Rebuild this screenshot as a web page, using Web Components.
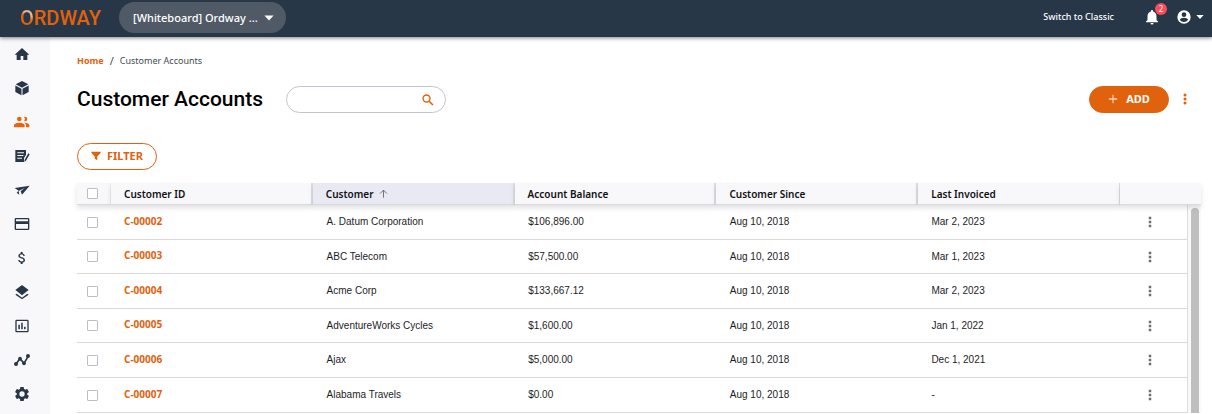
<!DOCTYPE html>
<html lang="en">
<head>
<meta charset="utf-8">
<title>Customer Accounts</title>
<style>
html,body{margin:0;height:100%}
body{font-family:"Noto Sans",sans-serif;font-size:10px;color:#1d1d1f;background:#fff;overflow:hidden}
</style>
</head>
<body>
<ow-app></ow-app>
<script>
const ICONS={
home:'<path d="M10 21v-6h4v6h6v-8h3L12 3 1 13h3v8z"/>',
box:'<path d="M12 1.500 21.500 6.500 12 11.500 2.500 6.500zM2 8.300 11.200 13v9.800L2 18zM22 8.300 12.800 13v9.800L22 18z"/>',
people:'<path d="M16.500 11a3.500 3.500 0 1 0 0-7 3.500 3.500 0 0 0-1.300.3 5.400 5.400 0 0 1 0 6.500c.4.100.8.200 1.300.200zM8 11a3.500 3.500 0 1 0 0-7 3.500 3.500 0 0 0 0 7zm0 2c-2.700 0-8 1.300-8 4v3h16v-3c0-2.700-5.300-4-8-4zm8.500 0h-1c1.400 1 2.500 2.300 2.500 4v3h5v-3c0-2.700-3.800-4-6.500-4z"/>',
invoice:'<path fill-rule="evenodd" d="M2 3h16v7l-3 5v6H2zM5 6.500V8h10V6.500zm0 4V12h9v-1.500zm0 4V16h7v-1.500zM21.500 8l2 1.500L18 19l-2.500 1.500.5-3z"/>',
send:'<path d="M1 9 23.500 5.500 12 19l-2-5 6-5-9 4.500L8 19l-4-3 3-3z"/>',
card:'<path d="M21 3H3a2 2 0 0 0-2 2v14a2 2 0 0 0 2 2h18a2 2 0 0 0 2-2V5a2 2 0 0 0-2-2zm0 16H3v-7h18zm0-11H3V5h18z"/>',
dollar:'<path d="M11.800 10.900c-2.270-.59-3-1.200-3-2.150 0-1.090 1.010-1.850 2.700-1.850 1.780 0 2.440.85 2.500 2.100h2.210c-.07-1.720-1.120-3.300-3.210-3.810V3h-3v2.160c-1.940.42-3.500 1.680-3.500 3.610 0 2.310 1.910 3.460 4.700 4.130 2.500.6 3 1.480 3 2.410 0 .69-.49 1.790-2.700 1.790-2.060 0-2.870-.92-2.980-2.100h-2.200c.12 2.190 1.760 3.420 3.680 3.830V21h3v-2.150c1.950-.37 3.500-1.500 3.500-3.550 0-2.840-2.430-3.810-4.700-4.400z"/>',
layers:'<path d="m12 20.500-8-6-2 1.500 10 7 10-7-2-1.500zM12 17l8-6.500L22 9l-10-7.500L2 9l2 1.500z"/>',
chart:'<path d="M20 2.500H4a2 2 0 0 0-2 2v15c0 1.100.9 2 2 2h16a2 2 0 0 0 2-2v-15a2 2 0 0 0-2-2zm0 17H4v-15h16zM6.500 10h2.300v7H6.500zm4.300-3h2.300v10h-2.300zm4.300 6h2.300v4h-2.300z"/>',
trend:'<path d="m3 18 6-8 6 7 6-10" fill="none" stroke="currentColor" stroke-width="2.500"/><circle cx="3" cy="18" r="3"/><circle cx="9" cy="10" r="2.800"/><circle cx="15" cy="17" r="2.800"/><circle cx="21" cy="6" r="3"/>',
gear:'<path transform="translate(-1.200 -1.200) scale(1.100)" d="M19.140 12.940c.04-.3.060-.61.060-.94s-.02-.64-.07-.94l2.030-1.580a.49.49 0 0 0 .12-.61l-1.920-3.320a.49.49 0 0 0-.59-.22l-2.390.96a7 7 0 0 0-1.620-.94l-.36-2.540a.48.480 0 0 0-.48-.41h-3.840a.48.480 0 0 0-.47.41l-.36 2.540a7.400 7.400 0 0 0-1.620.94l-2.390-.96a.48.480 0 0 0-.59.22L2.740 8.870a.47.470 0 0 0 .12.610l2.030 1.580a6 6 0 0 0 0 1.880l-2.030 1.580a.49.49 0 0 0-.12.610l1.920 3.320c.12.220.37.290.59.220l2.390-.96c.5.380 1.030.700 1.620.940l.36 2.540c.05.240.24.410.48.410h3.840c.24 0 .44-.17.470-.41l.36-2.540a7 7 0 0 0 1.620-.94l2.390.96c.22.080.47 0 .59-.22l1.920-3.320a.47.470 0 0 0-.12-.61zM12 15.600a3.600 3.600 0 1 1 0-7.200 3.600 3.600 0 0 1 0 7.200z"/>',
search:'<circle cx="9.500" cy="9.500" r="6" fill="none" stroke="currentColor" stroke-width="2.300"/><path d="m14 14 6.500 6.500" fill="none" stroke="currentColor" stroke-width="2.600"/>',
bell:'<path d="M12 22a2 2 0 0 0 2-2h-4a2 2 0 0 0 2 2zm6-6v-5c0-3.070-1.640-5.640-4.500-6.320V4a1.500 1.500 0 0 0-3 0v.68C7.630 5.360 6 7.920 6 11v5l-2 2v1h16v-1z"/>',
user:'<path d="M12 2a10 10 0 1 0 0 20 10 10 0 0 0 0-20zm0 3a3.500 3.500 0 1 1 0 7 3.500 3.500 0 0 1 0-7zm0 14.400c-2.600 0-4.900-1.300-6.200-3.400.03-2 4.100-3 6.200-3s6.200 1 6.200 3a7.400 7.400 0 0 1-6.200 3.400z"/>',
down:'<path d="M1 6h22L12 18z"/>',
plus:'<path d="M11 2h2v9h9v2h-9v9h-2v-9H2v-2h9z"/>',
filter:'<path d="M1 2h22v2.500L15 13v9l-6-3.500V13L1 4.500z"/>',
up:'<path d="M12 23V3M3 12l9-9 9 9" fill="none" stroke="currentColor" stroke-width="2.400"/>',
dots:'<path d="M9.500 1.500h5v5h-5zM9.500 9.500h5v5h-5zM9.500 17.500h5v5h-5z"/>',
more:'<circle cx="12" cy="4" r="3"/><circle cx="12" cy="12" r="3"/><circle cx="12" cy="20" r="3"/>'
};
const define=(name,html,setup)=>{
  const t=document.createElement('template');t.innerHTML=html;
  customElements.define(name,class extends HTMLElement{
    constructor(){super();this.attachShadow({mode:'open'}).append(t.content.cloneNode(true));}
    connectedCallback(){if(setup&&!this.ready){this.ready=true;setup(this,this.shadowRoot);}}
  });
};
define('ow-icon','<style>:host{display:block;flex:none;width:var(--size,14px);height:var(--size,14px)}svg{display:block;width:100%;height:100%;fill:currentColor}</style><svg viewBox="0 0 24 24" aria-hidden="true"></svg>',
  (el,r)=>{r.querySelector('svg').innerHTML=ICONS[el.getAttribute('name')];});

define('ow-topbar',`<style>
:host{display:flex;align-items:center;height:37px;padding:0 8px 4px 20px;background:#273747;color:#fff;box-shadow:0 1px 4px rgba(0,0,0,.5);position:relative;z-index:1;box-sizing:border-box}
button{font:inherit;color:inherit;border:0;background:none;padding:0;display:flex;align-items:center}
.logo{font:500 20px/24px Roboto,sans-serif;color:#e0620d;text-decoration:none;width:82px;padding-top:2px}
.logo span{background:linear-gradient(215deg,#f0b48c 35%,#e0620d 50%);-webkit-background-clip:text;background-clip:text;color:transparent}
.org{margin:2px auto 0 17px;width:167px;box-sizing:border-box;height:31px;border-radius:16px;background:#505a66;padding:0 12px 0 14px;font-size:11px;font-weight:500;gap:6px;white-space:nowrap}
.org ow-icon{--size:10px}
.switch{color:inherit;text-decoration:none;font-size:9px;font-weight:500;margin-right:29px}
.bell{position:relative;margin-right:15px;--size:18px}
.badge{position:absolute;left:12px;top:-5px;width:12px;height:12px;border-radius:6px;background:#fb4d57;font-size:8px;line-height:12px;text-align:center}
.user{gap:4px;--size:16px}
.user .c{--size:8px}
</style>
<a class="logo" href="#"><span>O</span>RDWAY</a>
<button class="org">[Whiteboard] Ordway ...<ow-icon name="down"></ow-icon></button>
<a class="switch" href="#">Switch to Classic</a>
<button class="bell" aria-label="Notifications"><ow-icon name="bell"></ow-icon><span class="badge">2</span></button>
<button class="user" aria-label="Account"><ow-icon name="user"></ow-icon><ow-icon class="c" name="down"></ow-icon></button>`);

define('ow-sidebar',`<style>
:host{display:block;width:50px;flex:none;background:#f8f8fb;color:#273747}
nav{display:flex;flex-direction:column;padding-left:14px}
a{display:flex;align-items:center;height:34px;color:inherit;--size:16px}
a[aria-current]{color:#e8650c}
</style><nav aria-label="Main"></nav>`,(el,r)=>{
  r.querySelector('nav').innerHTML=[['home','Home'],['box','Products'],['people','Customers'],['invoice','Invoices'],['send','Orders'],['card','Payments'],['dollar','Revenue'],['layers','Usage'],['chart','Reports'],['trend','Analytics'],['gear','Settings']]
  .map(([i,l])=>`<a href="#" aria-label="${l}"${i==='people'?' aria-current="page"':''}><ow-icon name="${i}"></ow-icon></a>`).join('');
});

define('ow-breadcrumb',`<style>
:host{display:flex;align-items:center;gap:6px;height:14px;color:#444b52;font-size:9px;line-height:14px}
a{color:#e0620d;font-weight:700;text-decoration:none}
.sep{font-size:11px}
</style><a href="#">Home</a><span class="sep">/</span><span><slot></slot></span>`);

define('ow-search',`<style>
:host{display:flex;align-items:center;box-sizing:border-box;width:160px;height:27px;border:1px solid #c3c3d1;border-radius:14px;padding:0 10px 0 12px;color:#e0620d}
input{flex:1;min-width:0;border:0;outline:0;background:none;font:inherit}
</style><input type="text" aria-label="Search customer accounts"><ow-icon name="search"></ow-icon>`);

define('ow-button',`<style>
:host{display:block}
button{display:flex;align-items:center;justify-content:center;gap:6px;box-sizing:border-box;width:80px;height:27px;border:1px solid #e0620d;border-radius:14px;background:#fff;color:#e0620d;font:700 11px/15px "Noto Sans",sans-serif;padding:0 0 2px;--size:10px}
:host([primary]) button{background:#e0620d;color:#fff;gap:8px}
</style><button><ow-icon></ow-icon><slot></slot></button>`,(el,r)=>{
  const i=document.createElement('ow-icon');i.setAttribute('name',el.getAttribute('icon'));
  r.querySelector('ow-icon').replaceWith(i);
});

define('ow-table',`<style>
:host{display:flex;flex-direction:column}
table{width:100%;border-collapse:separate;border-spacing:0;table-layout:fixed}
.sel{width:34px}.act{width:81px}
th{height:21px;padding:0 0 0 13px;text-align:left;font-weight:600;color:#111;background:#f8f8fb;border-bottom:1px solid #d9d9de;border-right:2px solid #dcdce4;box-shadow:0 3px 5px rgba(0,0,0,.12);line-height:14px}
th:first-child{padding-left:10px;border-right:1px solid #ededf1}
th:nth-last-child(2){border-right-width:1px}
th:last-child{border-right:0}
th[aria-sort]{background:#e9e9f4}
th span{display:flex;align-items:center;gap:5px}
th ow-icon{--size:9px;color:#666}
td{height:34px;box-sizing:border-box;padding:0 0 0 14px;border-bottom:1px solid #d9d9d9;font-family:"Liberation Sans",Arial,sans-serif;line-height:14px}
tr:nth-child(odd) td,tr:last-child td{height:35px}
td:first-child{padding-left:10px}
td:nth-child(2){padding:0 0 2px 13px}
td a{font:700 10px/14px "Noto Sans",sans-serif;color:#e0620d;text-decoration:none}
td:last-child{padding-left:25px}
input{appearance:none;display:block;box-sizing:border-box;width:11px;height:11px;margin:0;border:1px solid #bdbdcb;border-radius:1px;background:#fff}
td button{display:block;border:0;background:none;padding:0;color:#6e6e6e;--size:12px}
.body{display:flex}
.body table{flex:1}
.body .act{width:68px}
.track{box-sizing:border-box;width:14px;border-left:1px solid #dedede;background:#f9f9f9;padding:3px 2px 0 3px;display:flex}
.thumb{flex:1;background:#bfbfbf;border-radius:4px 4px 0 0}
.head{position:relative}
</style>
<table class="head"><colgroup><col class="sel"><col><col><col><col><col><col class="act"></colgroup><thead><tr>
<th><input type="checkbox" aria-label="Select all"></th><th>Customer ID</th><th aria-sort="ascending"><span>Customer <ow-icon name="up"></ow-icon></span></th><th>Account Balance</th><th>Customer Since</th><th>Last Invoiced</th><th></th></tr></thead></table>
<div class="body"><table><colgroup><col class="sel"><col><col><col><col><col><col class="act"></colgroup><tbody></tbody></table><div class="track"><div class="thumb"></div></div></div>`,(el,r)=>{
  r.querySelector('tbody').innerHTML=[
  ['C-00002','A. Datum Corporation','$106,896.00','Mar 2, 2023'],
  ['C-00003','ABC Telecom','$57,500.00','Mar 1, 2023'],
  ['C-00004','Acme Corp','$133,667.12','Mar 2, 2023'],
  ['C-00005','AdventureWorks Cycles','$1,600.00','Jan 1, 2022'],
  ['C-00006','Ajax','$5,000.00','Dec 1, 2021'],
  ['C-00007','Alabama Travels','$0.00','-']
  ].map(([id,n,b,d])=>`<tr><td><input type="checkbox" aria-label="Select ${id}"></td><td><a href="#">${id}</a></td><td>${n}</td><td>${b}</td><td>Aug 10, 2018</td><td>${d}</td><td><button aria-label="Actions for ${id}"><ow-icon name="dots"></ow-icon></button></td></tr>`).join('');
});

define('ow-app',`<style>
:host{display:flex;flex-direction:column;height:100%}
.shell{display:flex;flex:1;min-height:0}
main{flex:1;min-width:0;padding:17px 11px 0 27px}
.title{display:flex;align-items:center;height:27px;margin:18px 0 30px;padding-right:10px}
h1{font:500 21px/27px Roboto,sans-serif;color:#000;margin:0 23px 0 0}
.title ow-button{margin-left:auto}
.more{border:0;background:none;padding:0 0 2px;margin-left:10px;color:#e0620d;--size:12px}
ow-table{margin-top:13px}
</style>
<ow-topbar></ow-topbar>
<div class="shell"><ow-sidebar></ow-sidebar><main>
<ow-breadcrumb>Customer Accounts</ow-breadcrumb>
<div class="title"><h1>Customer Accounts</h1><ow-search></ow-search><ow-button primary icon="plus">ADD</ow-button><button class="more" aria-label="More"><ow-icon name="more"></ow-icon></button></div>
<ow-button icon="filter">FILTER</ow-button>
<ow-table></ow-table>
</main></div>`);
</script>
</body>
</html>
